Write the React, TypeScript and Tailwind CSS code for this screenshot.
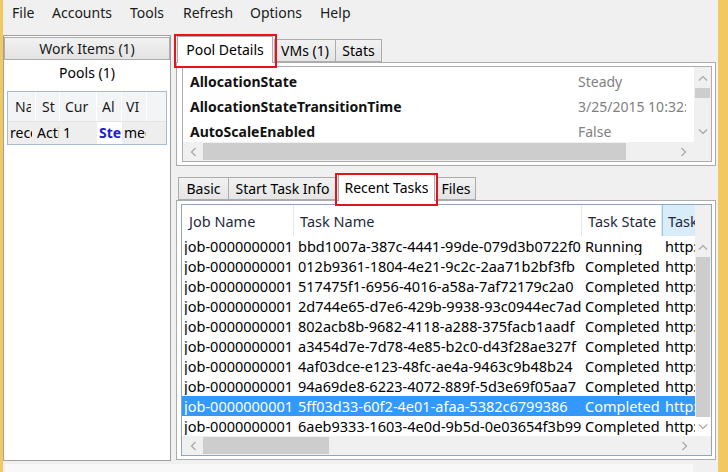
import React from "react";

const ChevUp = () => (
  <svg width="10" height="6" viewBox="0 0 10 6"><path d="M1 5.5 L5 1.5 L9 5.5" fill="none" stroke="#a6a6a6" strokeWidth="1.2" /></svg>
);
const ChevDown = () => (
  <svg width="10" height="6" viewBox="0 0 10 6"><path d="M1 0.5 L5 4.5 L9 0.5" fill="none" stroke="#a6a6a6" strokeWidth="1.2" /></svg>
);
const ChevLeft = () => (
  <svg width="6" height="10" viewBox="0 0 6 10"><path d="M5.5 1 L1.5 5 L5.5 9" fill="none" stroke="#a6a6a6" strokeWidth="1.2" /></svg>
);
const ChevRight = () => (
  <svg width="6" height="10" viewBox="0 0 6 10"><path d="M0.5 1 L4.5 5 L0.5 9" fill="none" stroke="#a6a6a6" strokeWidth="1.2" /></svg>
);

const tasks: [string, string][] = [
  ["bbd1007a-387c-4441-99de-079d3b0722f0", "Running"],
  ["012b9361-1804-4e21-9c2c-2aa71b2bf3fb", "Completed"],
  ["517475f1-6956-4016-a58a-7af72179c2a0", "Completed"],
  ["2d744e65-d7e6-429b-9938-93c0944ec7ad", "Completed"],
  ["802acb8b-9682-4118-a288-375facb1aadf", "Completed"],
  ["a3454d7e-7d78-4e85-b2c0-d43f28ae327f", "Completed"],
  ["4af03dce-e123-48fc-ae4a-9463c9b48b24", "Completed"],
  ["94a69de8-6223-4072-889f-5d3e69f05aa7", "Completed"],
  ["5ff03d33-60f2-4e01-afaa-5382c6799386", "Completed"],
  ["6aeb9333-1603-4e0d-9b5d-0e03654f3b99", "Completed"],
];

const props: [string, string][] = [
  ["AllocationState", "Steady"],
  ["AllocationStateTransitionTime", "3/25/2015 10:32:35"],
  ["AutoScaleEnabled", "False"],
];

export default function App() {
  return (
    <div className="w-[728px] h-[472px] bg-[#f0f0f0] flex overflow-hidden text-[14px] leading-[18px] text-black font-['Noto_Sans','Open_Sans',sans-serif]">
      <div className="w-[3px] shrink-0 bg-[#f1c862]" />
      <div className="w-[715px] shrink-0 flex flex-col">
        {/* menu */}
        <div className="h-[26px] flex items-center pl-[9px] text-[#1a1a1a]">
          <span className="w-[40px]">File</span>
          <span className="w-[78px]">Accounts</span>
          <span className="w-[53px]">Tools</span>
          <span className="w-[67px]">Refresh</span>
          <span className="w-[70px]">Options</span>
          <span>Help</span>
        </div>
        {/* body */}
        <div className="flex pt-[10px]">
          {/* left panel */}
          <div className="w-[168px] h-[426px] border border-[#a0a0a0] bg-white flex flex-col shrink-0 pt-[1px]">
            <div className="h-[23px] border border-[#acacac] bg-gradient-to-b from-[#f2f2f2] to-[#e3e3e3] flex items-center justify-center text-[#1a1a1a]">
              Work Items (1)
            </div>
            <div className="h-[26px] flex items-center justify-center">Pools (1)</div>
            <div className="mx-[3px] mt-[5px] border border-[#a8bad4] bg-white flex flex-col">
              <div className="h-[29px] flex bg-[#f3f4f6] text-[#1a1a1a]">
                <div className="w-[28px] pl-[7px] flex items-center overflow-hidden whitespace-nowrap border-r border-white"><span className="w-[16px] overflow-hidden">Na</span></div>
                <div className="w-[24px] pl-[6px] flex items-center overflow-hidden whitespace-nowrap border-r border-white"><span className="w-[16px] overflow-hidden">St</span></div>
                <div className="w-[37px] pl-[5px] flex items-center overflow-hidden whitespace-nowrap border-r border-white"><span className="w-[28px] overflow-hidden">Cur</span></div>
                <div className="w-[25px] pl-[5px] flex items-center overflow-hidden whitespace-nowrap border-r border-white"><span className="w-[16px] overflow-hidden">Al</span></div>
                <div className="w-[25px] pl-[4px] flex items-center overflow-hidden whitespace-nowrap border-r border-white"><span className="w-[18px] overflow-hidden">VI</span></div>
                <div className="flex-1" />
              </div>
              <div className="h-[23px] flex bg-[#eeeeee] border-t border-[#e4e4e4]">
                <div className="w-[28px] pl-[2px] flex items-center whitespace-nowrap"><span className="w-[22px] overflow-hidden">recent</span></div>
                <div className="w-[24px] pl-[1px] flex items-center whitespace-nowrap"><span className="w-[22px] overflow-hidden">Active</span></div>
                <div className="w-[37px] pl-[3px] flex items-center whitespace-nowrap"><span className="w-[30px] overflow-hidden">1</span></div>
                <div className="w-[25px] pl-[2px] flex items-center whitespace-nowrap bg-white text-[#1c1cd6] font-bold"><span className="w-[22px] overflow-hidden">Steady</span></div>
                <div className="w-[25px] pl-[2px] flex items-center whitespace-nowrap"><span className="w-[22px] overflow-hidden">medium</span></div>
                <div className="flex-1" />
              </div>
            </div>
          </div>
          {/* right area */}
          <div className="w-[540px] ml-[5px] flex flex-col shrink-0">
            {/* top tabs */}
            <div className="h-[27px] flex items-end">
              <div className="relative ml-[1px] w-[96px] h-[27px] bg-white border-l border-t border-r border-[#acacac] flex items-center justify-center pb-[1px] z-10 -mb-[1px]">
                Pool Details
                <div className="absolute left-[-4px] top-[-3px] w-[103px] h-[34px] border-2 border-[#e3141e]" />
              </div>
              <div className="ml-[1px] w-[62px] h-[23px] bg-gradient-to-b from-[#f2f2f2] to-[#e5e5e5] border border-[#acacac] flex items-center justify-center">VMs (1)</div>
              <div className="-ml-[1px] w-[47px] h-[23px] bg-gradient-to-b from-[#f2f2f2] to-[#e5e5e5] border border-[#acacac] flex items-center justify-center">Stats</div>
            </div>
            {/* panel 1 */}
            <div className="h-[104px] border border-[#acacac] bg-white pl-[5px] pt-[3px] pr-[3px] pb-[3px]">
              <div className="h-full border border-[#abadb3] flex flex-col">
                <div className="flex h-[75px]">
                  <div className="w-[511px] pt-[2px] overflow-hidden">
                    {props.map(([k, v]) => (
                      <div key={k} className="h-[25px] flex items-center whitespace-nowrap">
                        <div className="w-[395px] pl-[7px] font-bold text-[#111]">{k}</div>
                        <div className="w-[108px] overflow-hidden text-[#808080]">{v}</div>
                      </div>
                    ))}
                  </div>
                  <div className="w-[17px] bg-[#f0f0f0] flex flex-col">
                    <div className="h-[21px] flex items-center justify-center"><ChevUp /></div>
                    <div className="h-[10px] mx-[1px] bg-[#cdcdcd]" />
                    <div className="flex-1" />
                    <div className="h-[21px] flex items-center justify-center"><ChevDown /></div>
                  </div>
                </div>
                <div className="flex h-[19px]">
                  <div className="w-[511px] bg-[#f0f0f0] flex items-center">
                    <div className="w-[20px] flex justify-center"><ChevLeft /></div>
                    <div className="w-[423px] h-[17px] bg-[#cdcdcd]" />
                    <div className="flex-1" />
                    <div className="w-[20px] flex justify-center"><ChevRight /></div>
                  </div>
                  <div className="w-[17px] bg-[#f0f0f0]" />
                </div>
              </div>
            </div>
            {/* bottom tabs */}
            <div className="h-[27px] mt-[7px] flex items-end">
              <div className="ml-[2px] w-[51px] h-[23px] bg-gradient-to-b from-[#f2f2f2] to-[#e5e5e5] border border-[#acacac] flex items-center justify-center">Basic</div>
              <div className="-ml-[1px] w-[109px] h-[23px] bg-gradient-to-b from-[#f2f2f2] to-[#e5e5e5] border border-[#acacac] flex items-center justify-center">Start Task Info</div>
              <div className="relative ml-[1px] w-[97px] h-[27px] bg-white border-l border-t border-r border-[#acacac] flex items-center justify-center pb-[1px] z-10 -mb-[1px]">
                Recent Tasks
                <div className="absolute left-[-4px] top-[-2px] w-[103px] h-[33px] border-2 border-[#e3141e]" />
              </div>
              <div className="ml-[1px] w-[40px] h-[23px] bg-gradient-to-b from-[#f2f2f2] to-[#e5e5e5] border border-[#acacac] flex items-center justify-center">Files</div>
            </div>
            {/* panel 2 */}
            <div className="h-[260px] border border-[#acacac] bg-white pl-[4px] pt-[3px] pr-[3px] pb-[3px] text-[14.5px]">
              <div className="h-full border border-[#8fa4bf] flex flex-col">
                <div className="h-[31px] flex text-[#1e2a3c]">
                  <div className="w-[112px] pl-[7px] flex items-center border-r border-[#e3e6ea] whitespace-nowrap">Job Name</div>
                  <div className="w-[288px] pl-[6px] flex items-center border-r border-[#e3e6ea] whitespace-nowrap">Task Name</div>
                  <div className="w-[80px] pl-[6px] flex items-center border-r border-[#e3e6ea] whitespace-nowrap">Task State</div>
                  <div className="w-[33px] pl-[5px] flex items-center bg-[#d9ecfa] border-l border-[#93cbf0] overflow-hidden whitespace-nowrap">Task Url</div>
                  <div className="flex-1 bg-[#f0f0f0]" />
                </div>
                <div className="flex h-[200px]">
                  <div className="w-[513px] flex flex-col overflow-hidden">
                    {tasks.map(([id, st], i) => (
                      <div
                        key={id}
                        className={
                          i === 8
                            ? "h-[20px] flex items-center whitespace-nowrap bg-[#3399ff] text-white"
                            : "h-[20px] flex items-center whitespace-nowrap"
                        }
                      >
                        <div className="w-[112px] pl-[2px] overflow-hidden">job-0000000001</div>
                        <div className="w-[288px] pl-[4px] overflow-hidden">{id}</div>
                        <div className="w-[80px] pl-[3px] overflow-hidden">{st}</div>
                        <div className="w-[33px] pl-[3px] overflow-hidden">http://</div>
                      </div>
                    ))}
                  </div>
                  <div className="w-[16px] bg-[#f0f0f0] flex flex-col">
                    <div className="h-[21px] flex items-center justify-center"><ChevUp /></div>
                    <div className="h-[160px] mx-[1px] bg-[#cdcdcd]" />
                    <div className="flex-1 flex items-center justify-center bg-white"><ChevDown /></div>
                  </div>
                </div>
                <div className="flex flex-1">
                  <div className="w-[513px] bg-[#f0f0f0] flex items-center">
                    <div className="w-[21px] flex justify-center"><ChevLeft /></div>
                    <div className="w-[126px] h-[17px] bg-[#cdcdcd]" />
                    <div className="flex-1" />
                    <div className="w-[20px] flex justify-center"><ChevRight /></div>
                  </div>
                  <div className="flex-1 bg-[#f0f0f0]" />
                </div>
              </div>
            </div>
          </div>
        </div>
        <div className="mt-[3px] ml-[2px] w-[688px] h-[8px] bg-[#f8f8f8]" />
      </div>
      <div className="w-[10px] shrink-0 bg-[#f1c862]" />
    </div>
  );
}
